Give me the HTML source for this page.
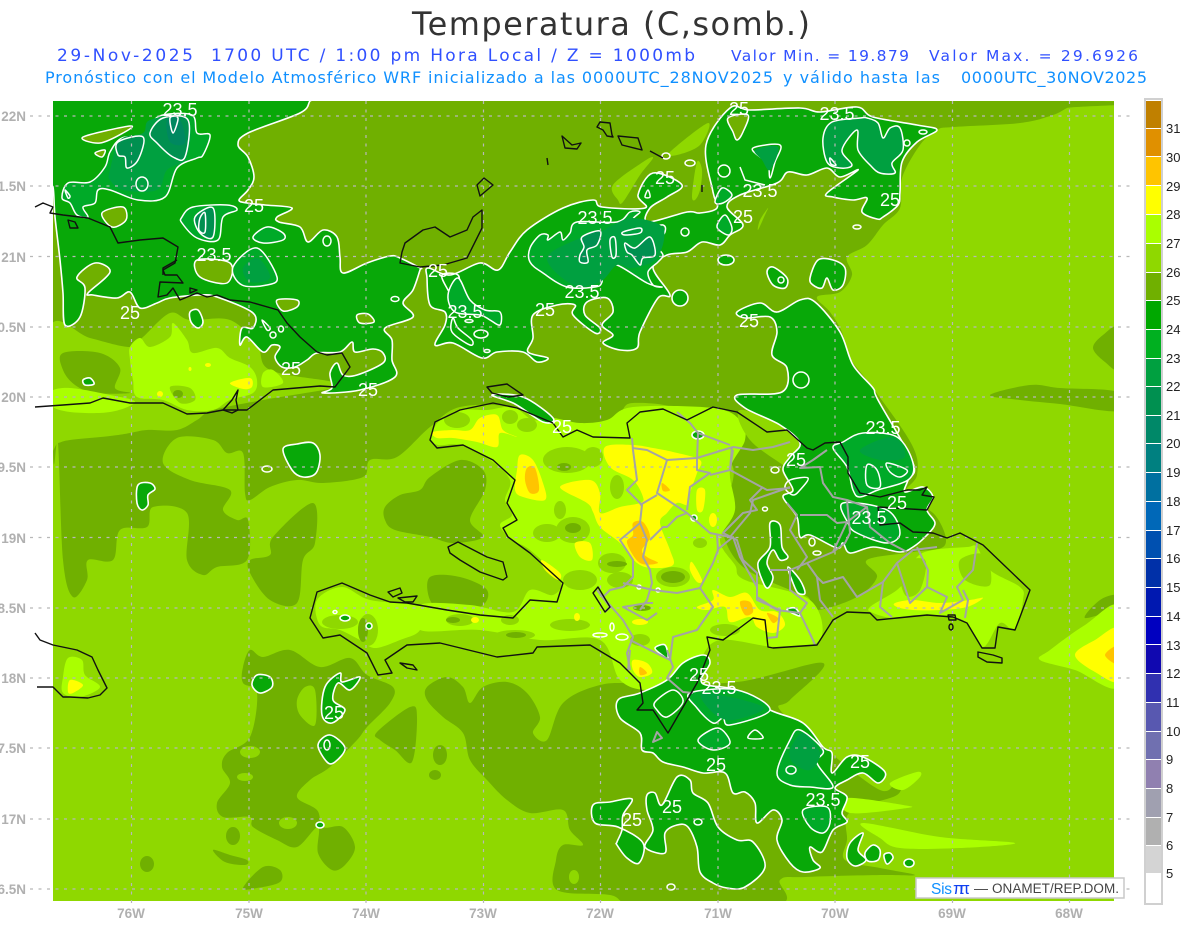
<!DOCTYPE html>
<html><head><meta charset="utf-8"><title>Temperatura</title>
<style>
html,body{margin:0;padding:0;background:#fff;width:1200px;height:927px;overflow:hidden}
svg{display:block;font-family:"Liberation Sans",sans-serif}
.o{fill:#70b000}.b{fill:#8fd800}.l{fill:#aaff00}.y{fill:#ffff00}.r{fill:#ffc400}
.g{fill:#08a808;stroke:#fff;stroke-width:1.6;stroke-linejoin:round}
.h{fill:#70b000;stroke:#fff;stroke-width:1.5;stroke-linejoin:round}
.a{fill:#00aa28;stroke:#fff;stroke-width:1.5;stroke-linejoin:round}
.d{fill:#00a040;stroke:none}
.e{fill:#009050;stroke:#fff;stroke-width:1.5;stroke-linejoin:round}
.n{fill:none;stroke:#fff;stroke-width:1.5;stroke-linejoin:round}
.c{fill:none;stroke:#111;stroke-width:1.4;stroke-linejoin:round}
.p{fill:none;stroke:#a4a4a4;stroke-width:2;stroke-linejoin:round}
.t{fill:#fff;font-size:18px;text-anchor:middle}
.ax{fill:#b0b0b0;font-size:13.5px;font-weight:bold;stroke:none}
.lg{fill:#222;font-size:13px}
.dv{font-family:"DejaVu Sans",sans-serif}
</style></head><body>
<svg width="1200" height="927" viewBox="0 0 1200 927" xmlns="http://www.w3.org/2000/svg">
<defs><clipPath id="m"><rect x="53" y="101" width="1061" height="800"/></clipPath></defs>
<text class="dv" x="412" y="35" font-size="32" fill="#333" textLength="398" lengthAdjust="spacing">Temperatura (C,somb.)</text>
<g class="dv" font-size="17" fill="#3050ff">
<text x="57" y="61" textLength="136">29-Nov-2025</text>
<text x="211" y="61" textLength="484">1700 UTC / 1:00 pm Hora Local / Z = 1000mb</text>
<text x="731" y="61" font-size="15.500" textLength="178">Valor Min. = 19.879</text>
<text x="929" y="61" font-size="15.500" textLength="209">Valor Max. = 29.6926</text>
</g>
<g class="dv" font-size="16" fill="#1090ff">
<text x="45" y="83" textLength="728">Pronóstico con el Modelo Atmosférico WRF inicializado a las 0000UTC_28NOV2025</text>
<text x="783" y="83" textLength="157">y válido hasta las</text>
<text x="961" y="83" textLength="186">0000UTC_30NOV2025</text>
</g>

<g clip-path="url(#m)">
<rect x="53" y="101" width="1061" height="800" class="b"/>
<!-- olive north -->
<polygon class="o" points="53,101 1083,101 1067,108 1053,115 1020,123 953,127 937,130 920,145 902,178 900,208 883,225 867,245 847,257 852,275 840,292 817,297 830,312 842,332 850,358 873,388 912,445 917,475 905,495 935,515 945,545 913,552 867,560 877,577 857,597 817,610 808,597 790,590 743,567 723,533 727,503 733,467 707,443 680,410 633,403 620,413 600,430 553,423 513,407 460,407 430,427 397,457 370,460 363,477 323,483 297,480 270,487 250,500 245,493 243,453 227,453 213,440 177,438 163,463 190,480 230,490 223,510 237,520 248,520 247,560 217,567 203,575 187,560 187,513 153,507 147,527 120,530 113,560 88,560 87,580 73,597 63,560 58,443 53,443"/>
<polygon class="o" points="273,537 313,503 315,543 303,560 297,603 270,600 250,573 250,560 270,555"/>
<polygon class="o" points="385,507 400,495 420,490 430,477 460,460 483,470 485,490 470,520 483,537 453,543 430,537 395,530 385,520"/>
<polygon class="o" points="430,577 460,577 487,590 480,607 445,610 430,600"/>
<polygon class="o" points="243,667 250,650 263,657 290,650 320,667 350,658 367,675 393,687 390,703 367,727 357,740 330,767 310,780 297,797 317,810 323,827 343,827 355,847 345,865 332,870 318,853 318,827 297,847 277,840 253,827 250,817 223,817 217,803 230,783 222,767 227,753 250,737 257,693 243,683"/>
<polygon class="b" points="305,687 297,700 300,715 315,725 315,690"/>
<ellipse class="b" cx="250" cy="752" rx="10" ry="6"/><ellipse class="b" cx="245" cy="777" rx="8" ry="4"/><ellipse class="b" cx="288" cy="823" rx="9" ry="6"/>
<polygon class="o" points="427,700 427,687 447,677 463,687 470,703 483,687 507,682 527,693 540,717 533,733 547,740 563,703 600,685 640,683 737,682 823,663 790,700 780,710 823,747 880,790 897,780 897,795 850,812 847,840 845,860 880,868 915,875 880,875 805,877 780,880 777,905 640,905 610,895 557,890 556,860 563,845 583,845 570,830 563,810 530,813 507,800 487,780 470,760 463,733 443,717"/>
<ellipse class="b" cx="574" cy="877" rx="5" ry="7"/>
<polygon class="o" points="377,732 410,707 417,717 412,762 395,750 380,740"/>
<ellipse class="o" cx="440" cy="755" rx="7" ry="10"/><ellipse class="o" cx="435" cy="775" rx="6" ry="5"/>
<polygon class="o" points="213,850 230,855 247,860 245,865 225,862"/><ellipse class="o" cx="147" cy="864" rx="7" ry="8"/>
<polygon class="o" points="243,888 263,867 280,870 280,882 257,888"/><ellipse class="o" cx="233" cy="836" rx="7" ry="9"/>
<polygon class="o" points="1118,328 1103,335 1093,348 1105,362 1118,368"/>
<polygon class="o" points="990,395 1030,385 1060,388 1118,392 1118,411 1060,404 1020,400"/>
<polygon class="o" points="1118,595 1100,600 1085,618 1118,607"/>
<!-- bright patches on north olive -->
<polygon class="b" points="50,327 90,338 130,347 143,337 170,313 190,320 230,320 257,345 270,370 333,382 333,388 263,400 213,410 197,420 177,430 147,430 130,433 110,436 70,440 58,443 50,443"/>
<polygon class="o" points="63,353 100,353 120,368 115,388 130,393 95,393 75,385 63,370"/>
<polygon class="l" points="130,347 140,338 150,347 170,337 173,323 187,340 193,353 217,348 230,358 250,367 257,380 253,393 230,400 213,410 187,410 163,400 137,397 133,380 130,360"/>
<polygon class="l" points="263,373 273,370 283,383 263,387"/>
<polygon class="l" points="50,392 70,388 110,395 135,402 110,412 70,412 50,405"/>
<polygon class="b" points="170,387 190,388 195,400 180,403"/><ellipse class="o" cx="178" cy="394" rx="5" ry="4"/>
<polygon class="y" points="230,383 250,378 252,387 243,389"/><ellipse class="y" cx="208" cy="365" rx="3" ry="2"/><ellipse class="y" cx="190" cy="369" rx="1.5" ry="2"/><ellipse class="y" cx="160" cy="394" rx="3" ry="3"/>
<polygon class="b" points="613,185 643,162 653,158 640,175 623,202 618,200"/>
<polygon class="b" points="670,152 708,123 700,145 677,155"/>
<polygon class="b" points="697,162 702,170 700,190 695,200 692,195"/>
<polygon class="b" points="760,220 768,208 765,215 758,230"/>
<!-- Land -->
<polygon class="l" points="430,438 440,420 460,410 487,410 513,407 533,420 553,418 580,423 607,420 633,407 713,408 740,420 745,440 730,470 735,510 720,540 735,565 745,580 810,600 820,640 777,647 720,640 700,660 690,680 650,690 620,680 600,640 540,640 480,630 420,630 420,605 470,605 513,612 530,590 553,595 560,580 530,550 512,540 500,525 512,515 505,500 510,480 490,460 460,445 438,445"/>
<polygon class="l" points="317,600 342,587 370,600 420,607 420,630 400,640 375,648 360,640 340,630 320,625"/>
<g class="b">
<ellipse cx="457" cy="420" rx="13" ry="8"/><ellipse cx="510" cy="417" rx="8" ry="7"/><ellipse cx="527" cy="425" rx="10" ry="7"/><ellipse cx="567" cy="460" rx="24" ry="13"/><ellipse cx="593" cy="457" rx="10" ry="10"/><ellipse cx="617" cy="487" rx="7" ry="12"/><ellipse cx="560" cy="510" rx="6" ry="9"/><ellipse cx="573" cy="530" rx="17" ry="13"/><ellipse cx="547" cy="533" rx="14" ry="9"/><ellipse cx="612" cy="563" rx="14" ry="10"/><ellipse cx="580" cy="580" rx="17" ry="10"/><ellipse cx="620" cy="580" rx="13" ry="8"/><ellipse cx="673" cy="577" rx="17" ry="10"/><ellipse cx="660" cy="507" rx="10" ry="5"/><ellipse cx="700" cy="543" rx="7" ry="5"/><ellipse cx="510" cy="620" rx="9" ry="5"/><ellipse cx="460" cy="620" rx="14" ry="6"/><ellipse cx="515" cy="635" rx="20" ry="5"/><ellipse cx="570" cy="625" rx="20" ry="6"/><ellipse cx="340" cy="622" rx="18" ry="7"/><ellipse cx="368" cy="630" rx="10" ry="16"/><ellipse cx="640" cy="640" rx="10" ry="6"/><ellipse cx="725" cy="630" rx="15" ry="6"/>
<polygon points="740,410 790,430 850,470 860,490 830,500 790,470 750,440"/>
</g>
<g class="o">
<ellipse cx="564" cy="467" rx="7" ry="4"/><ellipse cx="573" cy="528" rx="8" ry="5"/><ellipse cx="617" cy="564" rx="10" ry="3"/><ellipse cx="673" cy="577" rx="12" ry="6"/><ellipse cx="642" cy="608" rx="9" ry="3"/><ellipse cx="363" cy="630" rx="5" ry="12"/><ellipse cx="516" cy="635" rx="10" ry="3"/><ellipse cx="453" cy="620" rx="7" ry="3"/>
</g>
<polygon class="l" points="68,658 82,660 85,675 100,687 80,697 63,693 63,677"/>
<polygon class="y" points="70,680 83,685 73,693 68,692"/>
<!-- East Dominican -->
<polygon class="l" points="870,607 897,590 907,577 917,557 933,550 967,547 977,547 990,570 1020,587 1023,600 1015,630 1000,623 983,647 967,623 950,617 917,615 893,618 873,613"/>
<polygon class="b" points="900,565 925,560 920,590 905,595"/><polygon class="b" points="960,560 985,555 990,585 965,580"/>
<polygon class="y" points="895,603 913,600 940,603 970,600 983,598 967,607 940,610 913,610 897,607"/>
<polygon class="l" points="1120,607 1085,625 1050,650 1040,660 1075,670 1120,686"/>
<polygon class="y" points="1120,629 1095,640 1075,655 1095,672 1120,680"/>
<polygon class="r" points="1120,645 1105,655 1120,665"/>
<!-- South streaks -->
<polygon class="l" points="847,798 903,805 907,808 850,813"/>
<polygon class="l" points="863,823 940,837 1015,843 960,848 900,848 880,838"/>
<polygon class="l" points="890,783 917,772 920,777 903,790"/>
<!-- yellow -->
<polygon class="y" points="433,432 453,430 470,430 480,418 497,415 503,430 517,437 500,433 497,447 477,442 453,438 437,438"/>
<polygon class="y" points="520,455 533,460 543,483 545,500 523,497 515,490 517,470"/>
<polygon class="r" points="527,468 535,468 539,490 530,493 525,480"/>
<polygon class="y" points="605,447 633,445 653,448 673,452 700,460 697,473 690,493 688,505 677,503 667,513 660,523 670,550 673,565 653,568 637,563 620,543 600,527 593,512 587,503 560,487 590,480 600,493 600,513 620,507 640,503 643,497 633,480 610,467"/>
<polygon class="r" points="633,523 643,522 650,537 642,550 647,557 658,563 640,563 627,543 633,535"/>
<polygon class="r" points="662,483 670,490 663,491"/>
<polygon class="y" points="575,543 590,543 592,560 580,557"/><polygon class="y" points="542,560 560,573 558,580 545,570"/>
<polygon class="y" points="692,562 702,580 697,582 690,570"/><polygon class="y" points="697,490 705,490 703,510 697,510"/><ellipse class="y" cx="713" cy="520" rx="4" ry="7"/>
<polygon class="y" points="713,590 730,597 747,593 760,610 777,612 785,625 773,633 757,627 750,617 730,622 725,607 707,610 697,607 713,600"/>
<polygon class="r" points="740,602 750,602 753,612 745,615"/><polygon class="r" points="767,613 778,618 773,623"/>
<polygon class="y" points="633,660 647,663 652,673 640,677 633,670"/><polygon class="r" points="640,667 647,673 640,675"/>
<ellipse class="y" cx="475" cy="620" rx="4" ry="3"/><ellipse class="y" cx="577" cy="617" rx="3" ry="4"/><ellipse class="y" cx="640" cy="622" rx="8" ry="3"/>

<!-- main green: G1 -->
<polygon class="g" points="48,96 315,96 310,101 300,113 248,133 238,145 248,157 254,177 248,190 239,200 247,203 265,205 292,208 277,217 279,222 300,227 308,242 323,230 337,237 340,257 343,273 367,263 390,256 400,258 420,268 420,270 413,290 403,303 413,317 385,328 392,340 392,360 395,377 360,390 323,393 332,388 330,373 337,363 343,375 357,375 383,363 383,353 373,349 355,352 352,342 340,352 317,353 307,360 295,367 282,367 275,357 280,347 272,345 263,352 247,337 240,345 242,328 253,328 253,313 217,297 200,295 170,298 157,303 140,308 130,292 117,298 93,295 88,293 110,272 95,263 77,277 85,288 80,317 65,325 63,293 60,260 55,217 53,187 48,187"/>
<polygon class="h" points="83,137 130,126 123,133 100,143"/>
<polygon class="h" points="197,260 230,263 227,283 200,277"/>
<polygon class="h" points="102,213 123,207 126,220 112,227"/>
<polygon class="h" points="277,300 297,300 297,307 283,311"/><polygon class="h" points="357,315 368,314 374,322 360,323"/>
<polygon class="a" points="62,198 68,183 90,182 105,167 110,152 122,138 147,135 152,123 163,115 192,115 197,133 210,135 203,155 197,158 177,168 165,197 138,200 110,190 98,190 95,203 83,207 88,217 77,215 70,203"/>
<polygon class="d" points="110,170 120,140 143,133 150,120 187,117 187,157 167,170 157,190 123,190 110,180"/>
<polygon class="e" points="118,142 143,137 138,160 127,168 125,157 118,155"/>
<polygon class="e" points="150,133 163,118 188,120 185,157 173,157 157,143"/>
<polygon fill="#008860" points="167,120 180,120 185,143 170,142"/>
<polygon class="n" points="170,118 178,118 173,133"/>
<ellipse class="n" cx="142" cy="184" rx="6" ry="7"/><polygon class="h" points="95,153 105,150 102,157"/>
<polygon class="n" points="65,190 70,196 68,198"/>
<polygon class="a" points="182,217 193,207 227,205 237,210 223,217 218,240 197,238 182,223"/>
<polygon class="e" points="195,217 213,208 213,237 200,233"/><polygon class="n" points="200,218 205,213 205,232 199,230"/>
<polygon class="a" points="253,237 267,227 283,233 283,240 263,243"/>
<polygon class="a" points="233,267 257,248 277,277 267,285 242,285"/>
<polygon class="d" points="243,268 258,258 270,278 250,282"/>
<ellipse class="n" cx="327" cy="241" rx="4" ry="5"/><ellipse class="n" cx="395" cy="299" rx="4" ry="2.5"/>
<polygon class="n" points="262,320 270,328 267,330"/><ellipse class="n" cx="273" cy="335" rx="3" ry="3"/><ellipse class="n" cx="281" cy="329" rx="2.5" ry="3"/>
<!-- G1 blobs -->
<polygon class="g" points="190,312 198,310 203,322 198,328 191,322"/>
<polygon class="g" points="83,380 90,378 94,384 85,385"/>
<polygon class="g" points="283,449 297,444 313,443 320,455 316,473 303,477 292,470"/>
<ellipse class="n" cx="267" cy="469" rx="5" ry="3"/>
<polygon class="g" points="138,485 150,483 155,489 148,495 148,505 142,510 137,503"/>
<!-- G2 -->
<polygon class="g" points="428,268 450,275 480,263 498,270 510,252 527,230 563,208 593,200 602,207 645,208 638,195 653,173 682,185 667,197 650,208 648,222 687,212 700,213 717,208 713,192 706,145 730,108 750,110 800,108 820,112 857,107 873,117 917,125 937,130 917,142 902,162 900,192 898,205 883,217 877,219 862,212 867,198 853,200 833,197 827,193 858,170 840,177 827,168 807,175 788,172 777,183 740,195 727,207 743,225 730,235 720,245 702,242 687,252 667,255 653,268 670,295 658,298 640,332 637,348 620,350 603,343 613,335 602,325 613,312 607,298 587,302 585,315 600,328 595,333 573,315 575,305 557,305 533,315 533,338 528,352 548,358 537,362 523,352 497,352 482,358 453,343 435,345 445,325 445,312 430,305 427,278"/>
<polygon class="a" points="530,248 540,235 548,235 548,240 560,232 563,240 570,233 577,222 617,222 630,212 640,212 633,220 648,227 663,225 665,232 657,245 663,255 658,262 648,272 653,285 662,287 647,283 617,265 603,268 602,282 595,287 567,287 543,273 530,262"/>
<polygon class="d" points="547,258 580,238 600,232 613,225 633,218 663,228 657,258 633,268 617,265 600,282 573,285"/>
<polygon class="e" points="582,237 600,231 597,245 587,250 588,262 580,262 580,255 584,247"/>
<polygon class="n" points="610,240 615,238 616,255 612,257"/>
<polygon class="n" points="623,232 640,228 640,233 625,235"/>
<polygon class="e" points="625,243 635,248 650,237 655,255 643,258 640,265 632,255 627,252"/>
<polygon class="n" points="442,275 458,275 460,290 470,305 465,312 455,300 448,290"/>
<polygon class="a" points="448,295 458,278 470,300 485,310 500,312 500,325 490,320 480,315 455,312"/>
<polygon class="n" points="453,318 452,332 470,345 472,340 458,328"/>
<ellipse class="n" cx="481" cy="334" rx="7" ry="4"/><ellipse class="n" cx="469" cy="321" rx="4" ry="1.5"/><ellipse class="n" cx="487" cy="351" rx="3" ry="1.5"/>
<polygon class="h" points="728,118 748,115 743,132 737,140 733,132"/>
<polygon class="n" points="753,148 780,145 775,162 770,178 768,162 760,157"/>
<polygon class="d" points="755,150 778,147 770,170 762,160"/>
<polygon class="d" points="832,122 823,138 827,162 840,168 852,165 842,150 857,130 858,150 870,165 880,173 895,173 892,163 903,150 900,128 890,128 883,138 878,123 867,118 860,118"/>
<polygon class="n" points="832,122 823,138 827,162 840,168 852,165 842,150 857,130 858,150 870,165 880,173 895,173 892,163 903,150 900,128 890,128 883,138 878,123 867,118 860,118"/>
<ellipse class="n" cx="724" cy="171" rx="6" ry="6"/><ellipse class="n" cx="690" cy="163" rx="5" ry="3"/><ellipse class="n" cx="666" cy="156" rx="4" ry="3"/>
<polyline class="n" points="740,167 745,180 765,185"/>
<polygon class="a" points="715,202 722,188 732,195 723,203"/>
<polygon class="a" points="717,227 725,215 732,228 728,235"/>
<ellipse class="n" cx="685" cy="232" rx="4" ry="4"/><polygon class="n" points="645,197 648,190 650,197"/>
<ellipse class="n" cx="907" cy="143" rx="3" ry="3"/><ellipse class="n" cx="923" cy="132" rx="4" ry="2"/><polygon class="n" points="830,158 836,165 831,164"/>
<ellipse class="g" cx="726" cy="260" rx="8" ry="5"/>
<polygon class="g" points="767,272 773,267 787,278 785,288 773,285"/><ellipse class="n" cx="781" cy="280" rx="3" ry="3"/>
<ellipse class="g" cx="680" cy="298" rx="8" ry="8"/>
<polygon class="g" points="810,278 818,260 833,260 845,268 843,285 833,290 827,278 822,288 813,285"/>
<ellipse class="n" cx="857" cy="227" rx="4" ry="2"/>
<!-- G3 -->
<polygon class="g" points="737,312 760,303 777,312 800,300 815,302 840,332 853,365 873,388 878,400 913,463 908,480 905,492 923,487 933,497 927,510 935,523 927,535 913,547 900,552 873,547 850,553 843,543 837,548 810,535 800,537 797,517 783,497 793,490 783,470 790,457 800,443 780,425 745,408 737,395 782,392 787,368 772,355 777,332 770,317 745,318"/>
<polygon class="g" points="492,395 523,397 553,418 543,422 515,404"/>
<ellipse class="n" cx="801" cy="380" rx="8" ry="8"/>
<polygon class="a" points="843,442 863,433 897,437 913,463 908,480 878,490 860,497 853,490 847,467 833,448"/>
<polygon class="d" points="860,450 893,437 905,457 880,460"/>
<polygon class="n" points="867,465 877,470 880,487 867,485"/><polygon class="n" points="887,463 907,470 900,477 890,472"/>
<polygon class="a" points="843,503 887,510 900,533 887,543 857,533 848,523"/>
<polygon class="n" points="790,480 808,478 800,490 793,495 785,488"/>
<ellipse class="n" cx="812" cy="542" rx="3" ry="4"/><ellipse class="n" cx="817" cy="553" rx="4" ry="2"/><ellipse class="n" cx="775" cy="470" rx="4" ry="3"/><ellipse class="n" cx="765" cy="509" rx="2.5" ry="2"/>
<polygon class="g" points="770,523 780,525 782,547 788,557 780,560 773,550 767,563 773,577 768,588 763,582 758,563 770,547"/>
<polygon class="g" points="788,567 800,580 805,593 798,593 793,583"/>
<ellipse class="g" cx="698" cy="435" rx="6" ry="4"/><ellipse class="g" cx="694" cy="518" rx="3" ry="3"/><polygon class="g" points="787,610 795,608 800,616"/>
<ellipse class="n" cx="612" cy="627" rx="2" ry="4"/><ellipse class="n" cx="600" cy="635" rx="7" ry="2"/><ellipse class="n" cx="622" cy="637" rx="6" ry="3"/><ellipse class="n" cx="639" cy="587" rx="2" ry="2"/><ellipse class="n" cx="658" cy="590" rx="2" ry="2"/>
<ellipse class="n" cx="335" cy="612" rx="2" ry="1.5"/><ellipse class="g" cx="345" cy="618" rx="5" ry="3"/><ellipse class="g" cx="369" cy="626" rx="3" ry="3"/>
<polygon class="g" points="655,648 665,645 668,658 662,655"/>
<!-- G4 -->
<polygon class="g" points="618,700 640,693 667,680 683,663 703,655 710,663 702,683 737,690 770,710 803,723 823,747 832,753 832,773 847,757 863,757 885,772 878,783 863,773 847,780 835,788 847,797 842,813 847,822 833,830 822,852 810,847 813,860 820,868 803,872 790,863 777,840 782,820 773,810 757,823 755,803 745,792 733,793 725,773 703,773 683,767 663,762 653,753 642,750 640,733 620,718"/>
<polygon class="a" points="690,693 697,708 713,723 723,718 730,725 770,710 737,690"/>
<polygon class="d" points="703,693 763,707 733,720 713,713"/>
<polygon class="n" points="655,702 673,690 683,702 667,717 657,710"/>
<polygon class="a" points="698,740 718,728 730,743 713,750"/><polygon class="n" points="748,738 755,730 763,738"/>
<polygon class="a" points="777,773 790,740 800,730 823,750 817,763 833,787 810,787 790,785"/>
<polygon class="d" points="790,750 803,733 820,753 810,770 793,763"/>
<ellipse class="n" cx="791" cy="770" rx="5" ry="4"/>
<polygon class="a" points="803,810 827,807 830,823 823,833 810,827"/>
<polygon class="n" points="737,847 753,843 755,857 742,862"/>
<polygon class="g" points="593,805 610,802 632,799 623,815 622,830 617,842 617,845 627,858 639,863 643,843 618,827 595,823"/>
<polygon class="g" points="647,795 655,793 662,805 677,777 690,780 693,793 708,803 718,827 737,840 753,842 765,867 745,887 727,888 713,883 700,872 697,847 688,827 677,825 665,833 665,853 645,847 653,830 647,810"/>
<ellipse class="n" cx="698" cy="822" rx="4" ry="3"/><ellipse class="n" cx="671" cy="887" rx="4" ry="3"/>
<polygon class="g" points="847,858 850,843 863,833 858,850 866,860 855,866"/>
<polygon class="g" points="865,853 873,845 880,850 878,860 868,861"/>
<polygon class="g" points="884,855 890,853 893,858 887,864"/>
<ellipse class="g" cx="909" cy="863" rx="5" ry="4"/>
<!-- SW blobs -->
<polygon class="g" points="252,685 257,675 270,677 272,687 260,693"/>
<polygon class="g" points="325,687 340,673 342,682 360,677 350,690 338,683 333,700 345,710 332,723 322,715"/>
<polygon class="g" points="318,745 330,735 345,748 335,762 327,762"/><ellipse class="n" cx="327" cy="745" rx="3" ry="5"/>
<ellipse class="g" cx="320" cy="825" rx="4" ry="3"/>
</g>

<!-- grid -->
<g stroke="#b8b8b8" stroke-width="1.2" stroke-dasharray="3 5.500" fill="none">
<path d="M30 116H1135M30 186H1135M30 256.500H1135M30 327H1135M30 397H1135M30 467H1135M30 537.500H1135M30 608H1135M30 678H1135M30 748H1135M30 819H1135M30 889H1135"/>
<path d="M131.500 101V907M249 101V907M366 101V907M483.500 101V907M600.500 101V907M718 101V907M835 101V907M952.500 101V907M1069.500 101V907"/>
</g>

<!-- gray borders -->
<g class="p">
<polyline points="632,438 633,450 637,480 627,490 642,505 640,523 620,540 633,560 633,577 623,587 610,590 603,597 623,620 633,637 627,653 630,670"/>
<polyline points="632,448 647,450 667,460 697,458 733,447 753,450 773,447 790,442"/>
<polyline points="697,460 698,433 690,423 677,412"/>
<polyline points="698,433 730,445"/>
<polyline points="667,460 657,493 687,513 710,533 730,537 750,513 753,500 773,493 790,487"/>
<polyline points="697,460 697,470 710,473 690,487 687,510"/>
<polyline points="710,475 730,470 732,447"/>
<polyline points="657,495 640,505"/>
<polyline points="640,523 647,540 643,557 650,570 652,583 647,600 640,610"/>
<polyline points="687,513 677,517 667,527 663,527 650,540"/>
<polyline points="623,583 653,590 677,593 700,588 713,607 697,630 673,637 670,660 650,650 630,640"/>
<polyline points="700,588 713,563 718,550 717,535"/>
<polyline points="717,550 733,537 740,557 757,587 757,600 780,610 777,637 767,638"/>
<polyline points="653,603 647,603 623,607 647,620 657,613"/>
<polyline points="800,515 827,515 837,523 847,522 867,507 847,500 833,497 823,483 820,467 800,468 813,460 827,450"/>
<polyline points="787,503 797,515 790,530 807,557 797,570"/>
<polyline points="807,563 833,552 847,522"/>
<polyline points="807,563 817,577 823,583 843,577 857,597 883,582 897,563 913,550 937,547"/>
<polyline points="897,563 910,603 927,587 928,570 917,547"/>
<polyline points="927,587 947,597 940,613 963,600 957,587 973,570 977,543"/>
<polyline points="883,582 880,607 892,617"/>
<polyline points="963,590 968,600 965,618"/>
<polyline points="867,507 870,527 890,543 907,552"/>
<polyline points="847,500 850,533 845,543 833,552"/>
<polyline points="733,450 730,470 767,490 790,488"/>
<polyline points="763,487 750,500 757,510 743,513 723,533 737,540 743,560 757,573 757,597 777,610 800,613 807,603 790,590 790,570 807,563"/>
<polyline points="800,613 813,640 815,645"/>
<polyline points="770,570 790,570"/>
<polyline points="817,577 820,600 833,617"/>
<polyline points="630,650 628,670"/>
<polyline points="667,650 673,667 667,678 683,692 693,693"/>
<polygon points="653,742 657,732 662,738"/>
<polyline points="597,590 610,607 605,612"/>
</g>

<!-- coast -->
<g class="c">
<polyline points="35,207 43,203 53,207 50,213 63,215 88,218 110,227 118,243 140,240 163,238 178,247 175,263 163,270 165,275 177,275 183,283 160,282 158,297 167,295 173,288 180,300 197,293 207,297 217,295 230,300 250,302 278,310 287,323 300,337 317,352 327,355 342,353 350,367 335,387 320,386 273,390 247,410 223,410 207,413 187,414 163,403 130,403 103,398 90,403 63,405 35,407"/>
<polyline points="163,275 163,268 177,260"/><polygon points="190,288 197,290 190,293"/>
<polygon points="68,220 75,222 78,228 70,228"/>
<polygon points="223,410 232,400 238,390 236,400 238,410 232,413"/>
<polygon points="477,185 484,178 493,185 480,196"/>
<polygon points="600,122 610,123 612,135 613,137 607,136 603,130 597,127"/>
<polygon points="618,136 638,138 642,150 622,145"/>
<polygon points="562,136 572,145 581,143 577,149 565,148"/>
<polyline points="547,158 548,165"/><polyline points="650,151 663,158"/><polyline points="702,185 702,192"/>
<polygon points="400,263 402,252 405,243 423,230 435,227 450,237 467,230 473,217 482,210 482,228 467,258 443,265 420,267"/>
<polygon points="430,440 435,422 460,410 493,403 517,408 553,423 563,437 577,430 593,437 630,438 627,423 640,412 663,409 687,420 713,407 737,412 767,432 787,430 807,448 813,450 825,443 840,442 848,457 848,473 860,493 880,497 907,490 920,490 927,487 922,495 934,497 927,510 878,507 880,525 900,523 913,532 933,533 947,538 960,533 983,545 1030,590 1020,617 1015,630 998,627 995,648 982,648 967,623 953,617 927,615 897,618 877,620 870,613 847,612 833,620 817,645 773,648 768,647 765,620 753,618 737,630 723,640 707,637 710,650 697,683 668,733 653,710 637,710 643,703 640,683 630,673 620,663 590,645 537,647 533,653 497,657 440,643 407,645 385,660 392,673 378,675 367,653 340,635 323,638 310,618 317,592 342,583 370,595 390,602 407,603 447,610 480,615 513,618 530,600 557,602 563,583 530,553 508,537 503,528 517,520 507,503 515,480 493,460 463,445 437,448"/>
<polygon points="448,547 458,542 487,557 503,562 507,577 503,580 480,572 460,560 450,553"/>
<polygon points="487,387 507,384 523,395 508,397 492,393"/>
<polyline points="35,633 40,640 53,645 77,650 92,657 98,670 107,688 100,695 88,698 70,697 63,697 53,687 37,687"/>
<polygon points="593,593 598,587 610,607 605,612"/>
<polygon points="400,663 413,665 417,670 407,668"/>
<polygon points="388,592 400,588 402,593 393,597"/><polygon points="398,598 417,596 413,602 405,602"/>
<polygon points="978,652 993,655 1002,658 1002,663 987,662 978,657"/>
<polygon points="948,615 955,615 956,620 949,620"/><ellipse cx="951" cy="627" rx="2" ry="3"/>
</g>

<!-- labels -->
<g class="t">
<text x="180" y="116">23.5</text><text x="254" y="212">25</text><text x="214" y="261">23.5</text><text x="130" y="319">25</text>
<text x="465" y="318">23.5</text><text x="545" y="316">25</text><text x="438" y="277">25</text><text x="595" y="224">23.5</text><text x="582" y="298">23.5</text>
<text x="665" y="184">25</text><text x="739" y="115">25</text><text x="837" y="120">23.5</text><text x="760" y="197">23.5</text><text x="743" y="223">25</text><text x="890" y="206">25</text>
<text x="749" y="327">25</text><text x="291" y="375">25</text><text x="368" y="396">25</text><text x="562" y="433">25</text><text x="883" y="434">23.5</text>
<text x="796" y="466">25</text><text x="897" y="509">25</text><text x="869" y="524">23.5</text><text x="699" y="681">25</text><text x="719" y="694">23.5</text>
<text x="334" y="719">25</text><text x="716" y="771">25</text><text x="860" y="768">25</text><text x="823" y="806">23.5</text><text x="672" y="813">25</text><text x="632" y="826">25</text>
</g>

<!-- axis -->
<g class="ax" text-anchor="end">
<text x="26" y="121">22N</text><text x="26" y="191">1.5N</text><text x="26" y="262">21N</text><text x="26" y="332">0.5N</text><text x="26" y="402">20N</text><text x="26" y="472">9.5N</text><text x="26" y="543">19N</text><text x="26" y="613">8.5N</text><text x="26" y="683">18N</text><text x="26" y="753">7.5N</text><text x="26" y="824">17N</text><text x="26" y="894">6.5N</text>
</g>
<g class="ax" text-anchor="middle">
<text x="131" y="918">76W</text><text x="249" y="918">75W</text><text x="366" y="918">74W</text><text x="483" y="918">73W</text><text x="600" y="918">72W</text><text x="718" y="918">71W</text><text x="835" y="918">70W</text><text x="952" y="918">69W</text><text x="1069" y="918">68W</text>
</g>

<!-- legend -->
<rect x="1145" y="99" width="17" height="805" fill="#fff" stroke="#d0d0d0" stroke-width="2"/>
<g>
<rect x="1146" y="101" width="15" height="27" fill="#c08000"/><rect x="1146" y="129" width="15" height="27" fill="#e09000"/><rect x="1146" y="157" width="15" height="28" fill="#ffc400"/><rect x="1146" y="186" width="15" height="28" fill="#ffff00"/><rect x="1146" y="215" width="15" height="28" fill="#aaff00"/><rect x="1146" y="244" width="15" height="28" fill="#8fd800"/><rect x="1146" y="273" width="15" height="27" fill="#70b000"/><rect x="1146" y="301" width="15" height="28" fill="#00a800"/><rect x="1146" y="330" width="15" height="28" fill="#00b020"/><rect x="1146" y="359" width="15" height="27" fill="#00a040"/><rect x="1146" y="387" width="15" height="28" fill="#009050"/><rect x="1146" y="416" width="15" height="27" fill="#008868"/><rect x="1146" y="444" width="15" height="28" fill="#008080"/><rect x="1146" y="473" width="15" height="28" fill="#0070a0"/><rect x="1146" y="502" width="15" height="28" fill="#0068b8"/><rect x="1146" y="531" width="15" height="27" fill="#0050b0"/><rect x="1146" y="559" width="15" height="28" fill="#0030a8"/><rect x="1146" y="588" width="15" height="28" fill="#0018b0"/><rect x="1146" y="617" width="15" height="27" fill="#0000c0"/><rect x="1146" y="645" width="15" height="28" fill="#1008b0"/><rect x="1146" y="674" width="15" height="28" fill="#3030b0"/><rect x="1146" y="703" width="15" height="28" fill="#5858b0"/><rect x="1146" y="732" width="15" height="27" fill="#7070b0"/><rect x="1146" y="760" width="15" height="28" fill="#9080b0"/><rect x="1146" y="789" width="15" height="28" fill="#a0a0b0"/><rect x="1146" y="818" width="15" height="27" fill="#b0b0b0"/><rect x="1146" y="846" width="15" height="27" fill="#d4d4d4"/><rect x="1146" y="874" width="15" height="29" fill="#ffffff"/>
</g>
<g class="lg">
<text x="1166" y="133">31</text><text x="1166" y="162">30</text><text x="1166" y="191">29</text><text x="1166" y="219">28</text><text x="1166" y="248">27</text><text x="1166" y="277">26</text><text x="1166" y="305">25</text><text x="1166" y="334">24</text><text x="1166" y="363">23</text><text x="1166" y="391">22</text><text x="1166" y="420">21</text><text x="1166" y="448">20</text><text x="1166" y="477">19</text><text x="1166" y="506">18</text><text x="1166" y="535">17</text><text x="1166" y="563">16</text><text x="1166" y="592">15</text><text x="1166" y="621">14</text><text x="1166" y="650">13</text><text x="1166" y="678">12</text><text x="1166" y="707">11</text><text x="1166" y="736">10</text><text x="1166" y="764">9</text><text x="1166" y="793">8</text><text x="1166" y="822">7</text><text x="1166" y="850">6</text><text x="1166" y="878">5</text>
</g>

<!-- watermark -->
<rect x="916" y="878" width="208" height="20" fill="#fff" stroke="#c8c8c8" stroke-width="1.5"/>
<text x="931" y="894" font-size="15.500" fill="#1090ff" textLength="21">Sis</text>
<text x="953" y="894" font-size="17" fill="#1040f0" textLength="17">ππ</text>
<text x="974" y="893" font-size="14" fill="#444">—</text>
<text x="992" y="893" font-size="13.500" fill="#444" textLength="127">ONAMET/REP.DOM.</text>
</svg>
<script>
(function(){
var NS="http://www.w3.org/2000/svg";
var list=document.querySelectorAll("polygon");
for(var i=0;i<list.length;i++){
var el=list[i];
if(el.closest(".p,.c"))continue;
var v=el.getAttribute("points").trim().split(/\s+/).map(function(s){return s.split(",").map(Number)});
var n=v.length;if(n<3)continue;
var d="M"+v[0][0]+" "+v[0][1];
for(var k=0;k<n;k++){
var p0=v[(k-1+n)%n],p1=v[k],p2=v[(k+1)%n],p3=v[(k+2)%n];
var c1x=p1[0]+(p2[0]-p0[0])/6,c1y=p1[1]+(p2[1]-p0[1])/6,c2x=p2[0]-(p3[0]-p1[0])/6,c2y=p2[1]-(p3[1]-p1[1])/6;
d+="C"+c1x.toFixed(1)+" "+c1y.toFixed(1)+" "+c2x.toFixed(1)+" "+c2y.toFixed(1)+" "+p2[0]+" "+p2[1];
}
d+="Z";
var q=document.createElementNS(NS,"path");
q.setAttribute("d",d);
if(el.getAttribute("class"))q.setAttribute("class",el.getAttribute("class"));
if(el.getAttribute("fill"))q.setAttribute("fill",el.getAttribute("fill"));
el.parentNode.replaceChild(q,el);
}
})();
</script>
</body></html>
